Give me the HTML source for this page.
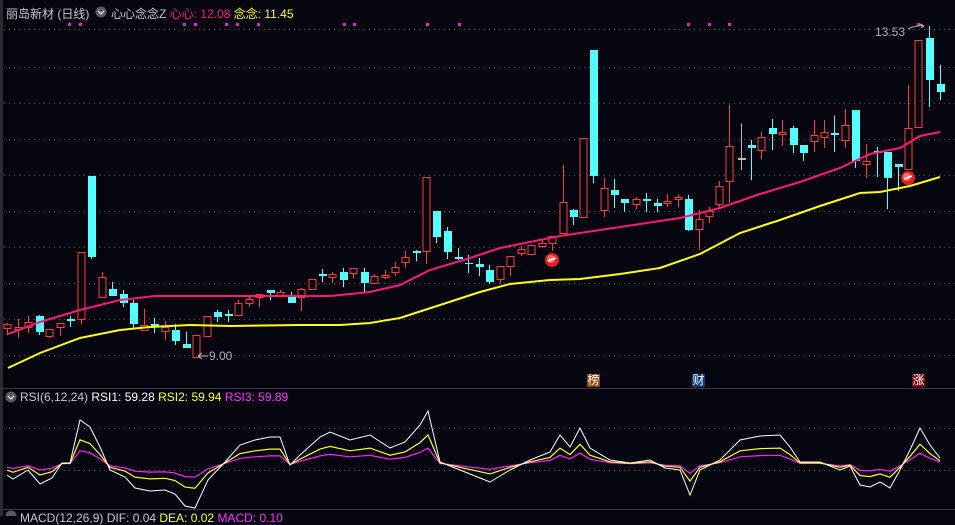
<!DOCTYPE html>
<html><head><meta charset="utf-8">
<style>
html,body{margin:0;padding:0;background:#05050f;width:955px;height:516px;overflow:hidden}
.t{position:absolute;font-family:"Liberation Sans","Noto Sans CJK SC",sans-serif;font-size:12px;white-space:nowrap}
</style></head><body>
<svg id="s" width="955" height="516" style="position:absolute;left:0;top:0" xmlns="http://www.w3.org/2000/svg"></svg>
<div class="t" style="left:6px;top:5px;color:#c8c8d0">丽岛新材 (日线)</div>
<div class="t" style="left:111px;top:5px;color:#c8c8d0">心心念念Z <span style="color:#ff1a7a">心心: 12.08</span> <span style="color:#ffff33">念念: 11.45</span></div>
<div class="t" style="left:20px;top:390px;color:#c8c8d0">RSI(6,12,24) <span style="color:#fff">RSI1: 59.28</span> <span style="color:#ffff33">RSI2: 59.94</span> <span style="color:#ff33ff">RSI3: 59.89</span></div>
<div class="t" style="left:20px;top:511px;color:#c8c8d0">MACD(12,26,9) DIF: 0.04 <span style="color:#ffff33">DEA: 0.02</span> <span style="color:#ff33ff">MACD: 0.10</span></div>
<div class="t" style="left:875px;top:25px;color:#b0b0b8;font-size:12px">13.53</div>
<div class="t" style="left:209px;top:349px;color:#b0b0b8;font-size:12px">9.00</div>
<div class="t" style="left:587px;top:374px;width:13px;height:13px;background:#8a4a10;color:#fff;font-size:12px;line-height:13px;text-align:center">榜</div>
<div class="t" style="left:692px;top:374px;width:13px;height:13px;background:#0b3d74;color:#fff;font-size:12px;line-height:13px;text-align:center">财</div>
<div class="t" style="left:912px;top:374px;width:13px;height:13px;background:#7a0a0a;color:#fff;font-size:12px;line-height:13px;text-align:center">涨</div>
<script>
var s=document.getElementById('s'),h='';
h+='<rect x="0" y="0" width="3" height="516" fill="#2a2a30"/>';
h+='<line x1="0" y1="388.5" x2="955" y2="388.5" stroke="#3a3a40"/>';
h+='<line x1="0" y1="509.5" x2="955" y2="509.5" stroke="#3a3a40"/>';
[29,67,103,139,175,211,247,283,319,355,428,470].forEach(function(y){h+='<line x1="4" y1="'+y+'.5" x2="955" y2="'+y+'.5" stroke="#50505a" stroke-dasharray="1,4"/>';});
h+='<circle cx="101" cy="12" r="5.5" fill="#5a5a60"/><path d="M98 11l3 3 3-3" stroke="#ddd" fill="none" stroke-width="1.3"/>';
h+='<circle cx="11" cy="397" r="5.5" fill="#5a5a60"/><path d="M8 396l3 3 3-3" stroke="#ddd" fill="none" stroke-width="1.3"/>';
h+='<circle cx="11" cy="516" r="5.5" fill="#5a5a60"/>';
[69,80,184,195,226,237,258,344,354,427,459,688,709,729,918].forEach(function(x){h+='<rect x="'+(x-1)+'" y="23" width="3" height="3" fill="#e020e0"/>';});
var C=[[7,'r',324,328,323,335],[18,'r',327,329,319,338],[28,'r',322,327,316,333],[39,'c',316,332,315,335],[49,'r',329,336,329,338],[60,'r',323,327,323,336],[70,'c',319,321,316,327],[81,'r',252,319,252,324],[91,'c',176,257,176,259],[102,'r',277,297,272,297],[112,'c',289,296,282,296],[123,'c',294,303,290,307],[133,'c',303,324,300,329],[144,'r',325,330,309,331],[154,'c',324,327,318,333],[165,'r',327,331,321,340],[175,'c',330,341,324,345],[186,'c',344,348,332,348],[196,'r',335,357,335,357],[207,'r',316,336,316,336],[217,'c',312,317,310,322],[228,'c',314,316,310,322],[238,'r',303,315,300,315],[249,'r',299,303,297,307],[259,'r',294,297,294,307],[270,'c',290,293,290,300],[280,'r',292,296,290,296],[291,'c',295,303,292,303],[301,'r',289,297,288,311],[312,'r',279,289,279,289],[322,'c',274,276,269,282],[332,'r',274,277,272,283],[343,'c',272,280,268,287],[353,'r',268,273,268,278],[364,'c',272,283,268,292],[374,'r',276,283,274,284],[385,'r',275,277,270,279],[395,'r',267,272,262,276],[405,'r',257,262,251,268],[416,'c',251,253,250,261],[426,'r',177,251,177,264],[436,'c',211,237,211,243],[447,'c',231,252,227,259],[458,'c',257,259,248,260],[468,'c',263,264,255,273],[479,'c',264,267,258,276],[489,'c',270,282,265,284],[500,'r',266,279,266,283],[510,'r',256,266,256,276],[521,'r',249,253,246,256],[531,'r',245,254,245,254],[542,'r',243,246,240,248],[552,'r',236,243,236,251],[563,'r',202,233,165,233],[573,'c',210,217,209,225],[583,'r',138,217,138,217],[593,'c',50,176,50,183],[604,'r',188,210,178,217],[614,'c',190,195,179,208],[624,'c',199,203,199,212],[636,'r',199,204,197,209],[646,'c',199,201,193,212],[657,'c',203,206,199,212],[667,'r',201,203,194,207],[678,'r',197,199,195,207],[688,'c',199,230,195,231],[699,'r',219,229,210,250],[709,'r',211,216,207,223],[719,'r',186,204,181,209],[729,'r',146,181,105,203],[741,'g',158,160,124,170],[751,'c',145,148,140,180],[761,'r',137,150,132,159],[772,'c',128,134,119,150],[782,'r',132,134,120,146],[793,'c',128,145,126,153],[803,'c',145,153,145,161],[814,'r',135,141,120,152],[824,'r',132,137,120,148],[834,'c',133,135,116,152],[845,'r',125,140,109,148],[855,'c',110,161,110,168],[866,'r',161,164,144,178],[877,'c',151,153,147,177],[887,'c',152,178,152,209],[898,'c',164,167,164,191],[908,'r',128,169,85,169],[918,'r',40,127,40,127],[929,'c',38,80,26,107],[940,'c',84,92,65,100]];
C.forEach(function(c){var x=c[0],col=c[1]=='r'?'#ff3b3b':(c[1]=='g'?'#bbbbbb':'#54ffff');
h+='<line x1="'+(x+.5)+'" y1="'+c[4]+'" x2="'+(x+.5)+'" y2="'+c[5]+'" stroke="'+col+'"/>';
var bh=Math.max(c[3]-c[2],1);
if(c[1]=='r'){h+='<rect x="'+(x-3)+'" y="'+(c[2]+.5)+'" width="7" height="'+bh+'" fill="#05050f" stroke="'+col+'"/>';}
else{h+='<rect x="'+(x-3)+'" y="'+c[2]+'" width="8" height="'+bh+'" fill="'+col+'"/>';}});
function pl(p,c,w){h+='<polyline points="'+p.map(function(a){return a.join(',')}).join(' ')+'" fill="none" stroke="'+c+'" stroke-width="'+w+'"/>';}
pl([[8,334],[40,322],[80,310],[120,300],[155,296],[230,296],[290,296],[330,296],[370,292],[400,285],[430,270],[470,258],[500,248],[530,242],[560,236],[600,230],[640,224],[680,218],[720,208],[760,194],[800,182],[840,168],[870,154],[900,148],[920,136],[940,132]],'#ff1a7a',2);
pl([[8,368],[40,353],[80,338],[120,330],[150,327],[190,325],[230,326],[300,325],[340,325],[370,323],[400,318],[440,305],[480,292],[510,284],[550,280],[580,279],[620,274],[660,268],[700,254],[740,233],[780,220],[820,206],[860,193],[880,192],[910,186],[940,177]],'#ffff1a',2);
h+='<path d="M198 356h10M198 356l4-3M198 356l4 3" stroke="#bbb" fill="none"/>';
h+='<path d="M908 29q8-4 16-3M924 26l-4-2M924 26l-3 2" stroke="#bbb" fill="none"/>';
[[552,260],[908,178]].forEach(function(p){h+='<circle cx="'+p[0]+'" cy="'+p[1]+'" r="7" fill="#e02020"/><circle cx="'+(p[0]-1)+'" cy="'+(p[1]-1)+'" r="4" fill="#ff9090" opacity=".7"/><path d="M'+(p[0]-4)+' '+(p[1]+1)+'l8-3" stroke="#fff" stroke-width="1.5"/>';});
var W=[[7,475],[13,479],[28,470],[40,484],[52,478],[62,463],[70,463],[80,420],[90,427],[100,447],[110,470],[125,477],[135,488],[150,491],[165,490],[175,494],[185,506],[195,508],[208,480],[225,462],[240,445],[255,440],[270,437],[280,437],[290,465],[300,455],[320,437],[330,432],[350,440],[370,435],[390,448],[405,442],[420,425],[428,411],[440,462],[460,470],[480,478],[490,482],[510,470],[530,460],[550,452],[560,435],[570,447],[580,428],[590,448],[610,460],[630,463],[650,460],[665,468],[680,470],[690,495],[700,470],[720,460],[740,440],[760,436],[780,435],[790,447],[800,462],[820,462],[840,470],[850,466],[860,485],[870,487],[880,482],[890,488],[900,470],[910,450],[920,428],[930,445],[940,458]];
pl(W.map(function(a){return [a[0],(464+(a[1]-464)*0.3).toFixed(1)]}),'#ff22ff',1.2);
pl(W.map(function(a){return [a[0],(464+(a[1]-464)*0.55).toFixed(1)]}),'#ffff22',1.2);
pl(W,'#ffffff',1);
s.innerHTML=h;
</script>
</body></html>
